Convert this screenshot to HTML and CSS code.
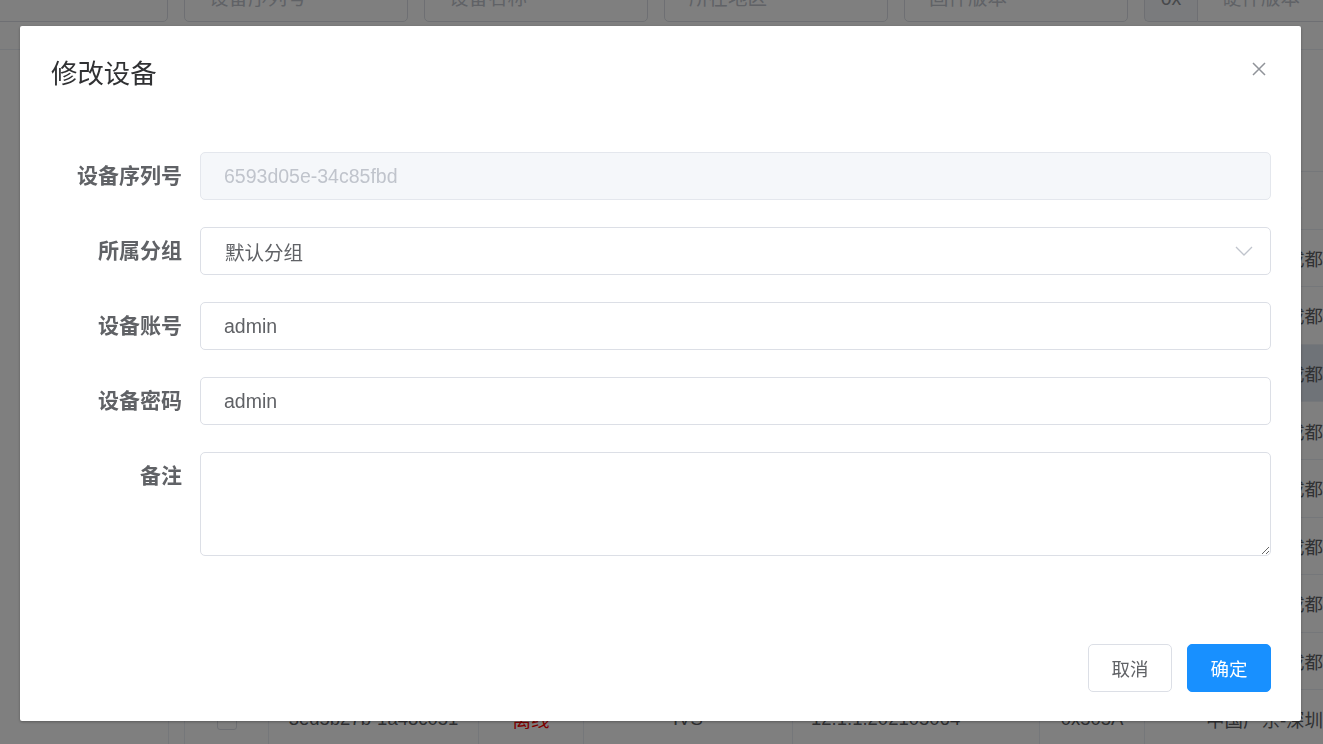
FILE: index.html
```html
<!DOCTYPE html>
<html lang="zh-CN">
<head>
    <meta charset="UTF-8">
    <meta name="viewport" content="width=device-width, initial-scale=1.0">
    <title>设备管理</title>
    <link rel="stylesheet" href="styles.css">
</head>
<body>
    <div class="page">
        <!-- Search bar -->
        <div class="search-bar">
            <div class="search-row">
                <input class="search-input">
                <input class="search-input" placeholder="设备序列号">
                <input class="search-input" placeholder="设备名称">
                <input class="search-input" placeholder="所在地区">
                <input class="search-input" placeholder="固件版本">
                <div class="search-group">
                    <span class="prepend">0x</span>
                    <input class="search-input grouped" placeholder="硬件版本">
                </div>
            </div>
        </div>

        <!-- Device table -->
        <div class="table-area">
            <table class="device-table">
                <colgroup>
                    <col style="width: 84px">
                    <col style="width: 210px">
                    <col style="width: 105px">
                    <col style="width: 209px">
                    <col style="width: 247px">
                    <col style="width: 105px">
                    <col style="width: 240px">
                </colgroup>
                <thead>
                    <tr>
                        <th><span class="checkbox"></span></th>
                        <th>设备序列号</th>
                        <th>状态</th>
                        <th>设备类型</th>
                        <th class="left">固件版本</th>
                        <th>硬件版本</th>
                        <th>所在地区</th>
                    </tr>
                </thead>
                <tbody>
                    <tr>
                        <td><span class="checkbox"></span></td>
                        <td>1a2f9c0e-58d3b7a1</td>
                        <td class="online">在线</td>
                        <td>IVS</td>
                        <td class="left">12.1.1.202105064</td>
                        <td>0x505A</td>
                        <td>中国四川-成都</td>
                    </tr>
                    <tr>
                        <td><span class="checkbox"></span></td>
                        <td>7c41e2b9-0d6f3a58</td>
                        <td class="online">在线</td>
                        <td>IVS</td>
                        <td class="left">12.1.1.202105064</td>
                        <td>0x505A</td>
                        <td>中国四川-成都</td>
                    </tr>
                    <tr class="current">
                        <td><span class="checkbox"></span></td>
                        <td>6593d05e-34c85fbd</td>
                        <td class="offline">离线</td>
                        <td>IVS</td>
                        <td class="left">12.1.1.202105064</td>
                        <td>0x505A</td>
                        <td>中国四川-成都</td>
                    </tr>
                    <tr>
                        <td><span class="checkbox"></span></td>
                        <td>b8e3047d-92c1f6e0</td>
                        <td class="online">在线</td>
                        <td>IVS</td>
                        <td class="left">12.1.1.202105064</td>
                        <td>0x505A</td>
                        <td>中国四川-成都</td>
                    </tr>
                    <tr>
                        <td><span class="checkbox"></span></td>
                        <td>0f5a61c3-7e28d49b</td>
                        <td class="online">在线</td>
                        <td>IVS</td>
                        <td class="left">12.1.1.202105064</td>
                        <td>0x505A</td>
                        <td>中国四川-成都</td>
                    </tr>
                    <tr>
                        <td><span class="checkbox"></span></td>
                        <td>d2c7b85a-14e90f36</td>
                        <td class="offline">离线</td>
                        <td>IVS</td>
                        <td class="left">12.1.1.202105064</td>
                        <td>0x505A</td>
                        <td>中国四川-成都</td>
                    </tr>
                    <tr>
                        <td><span class="checkbox"></span></td>
                        <td>49e0a3f1-c65b72d8</td>
                        <td class="online">在线</td>
                        <td>IVS</td>
                        <td class="left">12.1.1.202105064</td>
                        <td>0x505A</td>
                        <td>中国四川-成都</td>
                    </tr>
                    <tr>
                        <td><span class="checkbox"></span></td>
                        <td>a6d18f24-3b07e95c</td>
                        <td class="online">在线</td>
                        <td>IVS</td>
                        <td class="left">12.1.1.202105064</td>
                        <td>0x505A</td>
                        <td>中国四川-成都</td>
                    </tr>
                    <tr>
                        <td><span class="checkbox"></span></td>
                        <td>3ed5b27b-1a48c051</td>
                        <td class="offline">离线</td>
                        <td>IVS</td>
                        <td class="left">12.1.1.202105064</td>
                        <td>0x505A</td>
                        <td>中国广东-深圳</td>
                    </tr>
                </tbody>
            </table>
        </div>
    </div>

    <div class="modal-mask"></div>

    <!-- Edit device dialog -->
    <div class="dialog">
        <div class="dialog-header">
            <span class="dialog-title">修改设备</span>
            <button class="dialog-close" aria-label="关闭">
                <svg width="14" height="14" viewBox="0 0 14 14">
                    <path d="M1 1 L13 13 M13 1 L1 13" stroke="#909399" stroke-width="1.5" fill="none"/>
                </svg>
            </button>
        </div>

        <div class="dialog-body">
            <div class="form-item">
                <label class="form-label">设备序列号</label>
                <input class="form-input" value="6593d05e-34c85fbd" disabled>
            </div>
            <div class="form-item">
                <label class="form-label">所属分组</label>
                <div class="form-select">
                    <span>默认分组</span>
                    <svg width="18" height="10" viewBox="0 0 18 10">
                        <path d="M1 1 L9 9 L17 1" stroke="#c0c4cc" stroke-width="1.3" fill="none"/>
                    </svg>
                </div>
            </div>
            <div class="form-item">
                <label class="form-label">设备账号</label>
                <input class="form-input" value="admin">
            </div>
            <div class="form-item">
                <label class="form-label">设备密码</label>
                <input class="form-input" value="admin">
            </div>
            <div class="form-item">
                <label class="form-label">备注</label>
                <textarea class="form-textarea"></textarea>
            </div>
        </div>

        <div class="dialog-footer">
            <button class="btn">取消</button>
            <button class="btn btn-primary">确定</button>
        </div>
    </div>
</body>
</html>
```

FILE: styles.css
```css
body {
    margin: 0;
    width: 1323px;
    height: 744px;
    overflow: hidden;
    background: #fff;
    font-family: "Liberation Sans", "Noto Sans CJK SC", sans-serif;
    color: #606266;
}

/* ---- page behind the dialog ---- */
.search-bar {
    margin-top: -26px;
    padding-bottom: 27px;
    border-bottom: 1px solid #ebeef5;
}
.search-row {
    display: flex;
    gap: 16px;
    margin-left: -56px;
}
.search-input {
    box-sizing: border-box;
    width: 224px;
    height: 48px;
    flex-shrink: 0;
    padding: 0 24px;
    border: 1px solid #dcdfe6;
    border-radius: 5px;
    font-family: inherit;
    font-size: 19.5px;
    color: #606266;
}
.search-input::placeholder {
    color: #c0c4cc;
}
.search-group {
    display: flex;
    flex-shrink: 0;
}
.prepend {
    box-sizing: border-box;
    width: 53px;
    height: 48px;
    line-height: 46px;
    text-align: center;
    background: #f5f7fa;
    border: 1px solid #dcdfe6;
    border-right: none;
    border-radius: 5px 0 0 5px;
    color: #909399;
    font-size: 19.5px;
}
.search-input.grouped {
    border-radius: 0 5px 5px 0;
}

.table-area {
    margin-top: 121px;
    margin-left: 168px;
    padding-left: 15px;
    border-left: 1px solid #ebeef5;
}
.device-table {
    table-layout: fixed;
    border-collapse: collapse;
    width: 1200px;
    border-left: 1px solid #ebeef5;
    font-size: 18.5px;
    color: #606266;
}
.device-table th,
.device-table td {
    height: 56.6px;
    padding: 0;
    text-align: center;
    white-space: nowrap;
    overflow: hidden;
    border-bottom: 1px solid #ebeef5;
    border-right: 1px solid #ebeef5;
}
.device-table th {
    color: #909399;
    font-weight: bold;
    border-top: 1px solid #ebeef5;
}
.device-table .left {
    text-align: left;
    padding-left: 18px;
}
.device-table tr.current td {
    background: #dfe6f0;
}
.online {
    color: #13ce66;
}
.offline {
    color: #ff0000;
}
.checkbox {
    display: inline-block;
    box-sizing: border-box;
    width: 20px;
    height: 20px;
    vertical-align: middle;
    border: 1px solid #dcdfe6;
    border-radius: 3px;
    background: #fff;
}

.modal-mask {
    position: fixed;
    inset: 0;
    background: rgba(0, 0, 0, 0.5);
}

/* ---- dialog ---- */
.dialog {
    position: fixed;
    top: 26px;
    left: 20px;
    width: 1281px;
    background: #fff;
    border-radius: 2px;
    box-shadow: 0 1px 3px rgba(0, 0, 0, 0.3);
}
.dialog-header {
    display: flex;
    justify-content: space-between;
    align-items: flex-start;
    padding: 30px 35px 0 31px;
}
.dialog-title {
    font-size: 26.4px;
    line-height: 36px;
    color: #303133;
}
.dialog-close {
    margin-top: 6px;
    padding: 0;
    border: none;
    background: none;
    line-height: 0;
    cursor: pointer;
}
.dialog-body {
    padding: 60px 30px 88px 30px;
}
.form-item {
    display: flex;
    margin-bottom: 27px;
}
.form-item:last-child {
    margin-bottom: 0;
}
.form-label {
    box-sizing: border-box;
    width: 150px;
    flex-shrink: 0;
    padding-right: 18px;
    text-align: right;
    font-size: 21px;
    font-weight: bold;
    line-height: 48px;
    color: #606266;
}
.form-input,
.form-select,
.form-textarea {
    box-sizing: border-box;
    flex: 1;
    border: 1px solid #dcdfe6;
    border-radius: 5px;
    font-family: inherit;
    font-size: 19.5px;
    color: #606266;
    background: #fff;
}
.form-input {
    height: 48px;
    padding: 0 23px;
}
.form-input:disabled {
    background: #f5f7fa;
    border-color: #e4e7ed;
    color: #c0c4cc;
}
.form-select {
    display: flex;
    justify-content: space-between;
    align-items: center;
    height: 48px;
    padding: 0 17px 0 24px;
}
.form-textarea {
    height: 104px;
    padding: 8px 23px;
    resize: vertical;
}
.dialog-footer {
    display: flex;
    justify-content: flex-end;
    gap: 15px;
    padding: 0 30px 29px;
}
.btn {
    box-sizing: border-box;
    width: 84px;
    height: 48px;
    border: 1px solid #dcdfe6;
    border-radius: 5px;
    background: #fff;
    font-family: inherit;
    font-size: 18.5px;
    color: #606266;
    cursor: pointer;
}
.btn-primary {
    background: #1890ff;
    border-color: #1890ff;
    color: #fff;
}
```
